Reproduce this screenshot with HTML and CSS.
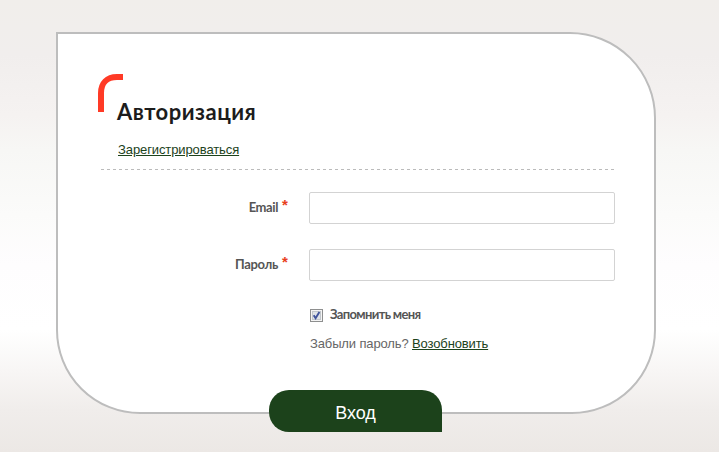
FILE: index.html
```html
<!DOCTYPE html>
<html lang="ru">
<head>
<meta charset="utf-8">
<title>Авторизация</title>
<link rel="stylesheet" href="styles.css">
</head>
<body>
<form class="card">
  <header class="header">
    <svg class="corner" width="25" height="38" viewBox="0 0 25 38"><path d="M3 38V19C3 9 9 3 19 3H25" fill="none" stroke="#ff3a26" stroke-width="6"/></svg>
    <div class="heading">
      <h1 class="title">Авторизация</h1>
      <a class="link register" href="#">Зарегистрироваться</a>
    </div>
  </header>
  <svg class="divider" width="514" height="1"><path d="M0 .5H514" stroke="#bbb" stroke-dasharray="3 3"/></svg>
  <div class="field">
    <label class="label" for="email"><span class="email">Email</span><span class="star">*</span></label>
    <input class="input" id="email" type="text">
  </div>
  <div class="field">
    <label class="label" for="password"><span class="password">Пароль</span><span class="star">*</span></label>
    <input class="input" id="password" type="password">
  </div>
  <div class="remember">
    <svg class="check" width="13" height="13" viewBox="0 0 13 13"><rect x=".5" y=".5" width="12" height="12" fill="#f4f4f4" stroke="#8e8f8f"/><rect x="2.5" y="2.5" width="8" height="8" fill="#dfe3e8" stroke="#c2c7cc"/><path d="M3.7 6.2L5.6 9.2L9.4 3" fill="none" stroke="#40549c" stroke-width="1.9"/></svg>
    <span class="remember-text">Запомнить меня</span>
  </div>
  <p class="forgot">Забыли пароль? <a class="link" href="#">Возобновить</a></p>
  <button class="submit" type="button">Вход</button>
</form>
</body>
</html>
```

FILE: styles.css
```css
* { box-sizing: border-box; }

body {
  margin: 0;
  height: 452px;
  padding: 32px 0 0 56px;
  overflow: hidden;
  background: linear-gradient(#f1eeeb 0, #f1eeed 55px, #f5f2f1 115px, #f7f7f5 150px, #fbfbfa 215px, #fefdfe 265px, #fff 330px, #f8f6f5 370px, #f0edeb 410px, #ece8e5 452px);
  font: 13px/16px "Liberation Sans", sans-serif;
  color: #666;
}

.card {
  display: flex;
  flex-direction: column;
  width: 600px;
  height: 382px;
  padding: 40px 39px 0 40px;
  border: 2px solid #bdbdbd;
  border-radius: 0 86px 84px 84px;
  background: #fff;
}

.header {
  display: flex;
  flex: none;
  height: 95px;
}

.corner { flex: none; }

.heading {
  display: flex;
  flex-direction: column;
  align-items: flex-start;
  margin: 24px 0 0 -6px;
}

.title {
  margin: 0;
  font: 700 22px/28px Lato, sans-serif;
  letter-spacing: 0.5px;
  color: #1c1c1c;
  white-space: nowrap;
}

.link { color: #1c421b; text-decoration: underline; }

.register {
  margin: 16px 0 0 1px;
  letter-spacing: -0.1px;
}

.divider {
  flex: none;
  margin: 0 0 22px 3px;
}

.field {
  display: flex;
  flex: none;
  justify-content: space-between;
  height: 32px;
  margin-bottom: 25px;
}

.label {
  display: flex;
  justify-content: flex-end;
  width: 190px;
  font: 700 13px/31px Lato, sans-serif;
  color: #555;
}

.email { letter-spacing: -0.4px; }

.password { letter-spacing: -0.3px; }

.star {
  width: 6px;
  margin-left: 4px;
  font: 700 15px/26px "Liberation Sans", sans-serif;
  color: #e8401c;
}

.input {
  width: 306px;
  height: 32px;
  margin: 0;
  padding: 0 8px;
  border: 1px solid #d3d3d3;
  border-radius: 2px;
  background: #fff;
  outline: none;
}

.remember {
  display: flex;
  flex: none;
  align-items: center;
  gap: 7px;
  height: 16px;
  margin: 0 0 0 212px;
}

.check { margin-top: 2px; }

.remember-text {
  font: 700 13px/16px Lato, sans-serif;
  letter-spacing: -0.65px;
  color: #555;
  white-space: nowrap;
}

.forgot {
  flex: none;
  margin: 14px 0 0 212px;
  letter-spacing: -0.13px;
  white-space: nowrap;
}

.submit {
  flex: none;
  width: 173px;
  height: 42px;
  margin: 38px 0 0 171px;
  padding: 4px 0 0;
  border: 0;
  border-radius: 20px 20px 0 20px;
  background: #1c421b;
  color: #fff;
  font: 18px/24px "Liberation Sans", sans-serif;
}
```
